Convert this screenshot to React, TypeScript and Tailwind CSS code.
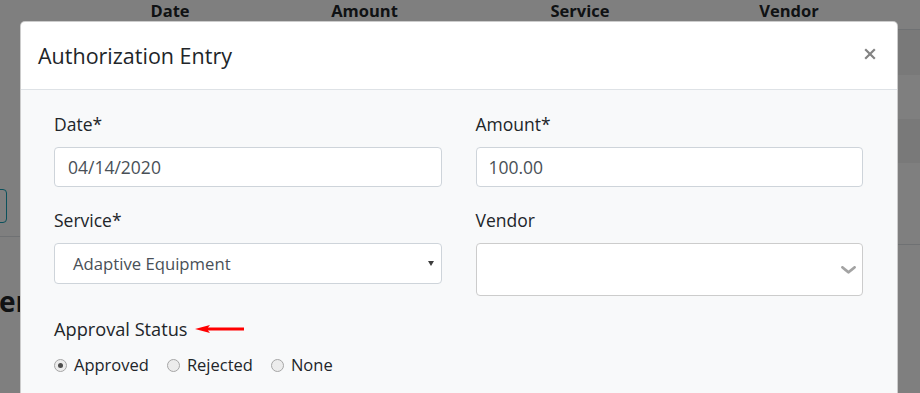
import React from "react";

function Radio({ checked, label }: { checked?: boolean; label: string }) {
  return (
    <div className="flex items-center gap-[7px]">
      <div className="w-[13px] h-[13px] rounded-full border border-[#a6a6a6] bg-[#ececec] flex items-center justify-center">
        {checked && <div className="w-[5px] h-[5px] rounded-full bg-[#4d4d4d]" />}
      </div>
      <span className="text-[16.5px] leading-[26px] text-[#212529]">{label}</span>
    </div>
  );
}

export default function App() {
  return (
    <div className="relative w-[920px] h-[393px] overflow-hidden bg-white font-['Open_Sans',sans-serif] text-[#212529]">
      {/* background page */}
      <div className="flex h-full">
        <div className="w-[20px] shrink-0 overflow-hidden">
          <div className="h-[189px]" />
          <div className="w-[40px] h-[34px] -ml-[33px] border border-[#17a2b8] rounded-[4px]" />
          <div className="mt-[13px] border-t border-[#dee2e6]" />
          <div className="mt-[47px] -ml-[1px] text-[28px] font-bold leading-[34px] whitespace-nowrap">ere</div>
        </div>
        <div className="flex-1 flex flex-col">
          <div className="h-[30px] flex pl-[40px] border-b border-[#dee2e6] text-[16.5px] font-bold leading-[20px] pt-[1px]">
            <div className="w-[220px] text-center">Date</div>
            <div className="w-[169px] text-center">Amount</div>
            <div className="w-[262px] text-center">Service</div>
            <div className="w-[156px] text-center">Vendor</div>
          </div>
          <div className="h-[45px] bg-black/5" />
          <div className="h-[44px]" />
          <div className="h-[44px] bg-black/5" />
          <div className="h-[82px] border-b border-[#dee2e6]" />
        </div>
      </div>

      {/* backdrop */}
      <div className="absolute inset-0 bg-black/50" />

      {/* modal */}
      <div className="absolute left-[20px] top-[21px] w-[878px] h-[400px] rounded-t-[5px] border border-black/20 bg-white overflow-hidden flex flex-col">
        <div className="h-[68px] shrink-0 flex items-center justify-between pl-[17px] pr-[21px] border-b border-[#dee2e6]">
          <h5 className="text-[21.5px] font-medium leading-[30px] text-[#212529]">Authorization Entry</h5>
          <svg width="12" height="12" viewBox="0 0 12 12" className="-mt-[4px]">
            <path d="M1.2 1.2 L10.8 10.8 M10.8 1.2 L1.2 10.8" stroke="#838383" strokeWidth="2.2" strokeLinecap="butt" />
          </svg>
        </div>
        <div className="flex-1 bg-[#f8f9fa] pl-[33px] pr-[34px] pt-[21px]">
          <div className="grid grid-cols-2 gap-x-[34px] gap-y-[20px] items-start">
            <div>
              <div className="text-[17.5px] leading-[26px] mb-[10px]">Date*</div>
              <div className="h-[40px] bg-white border border-[#ced4da] rounded-[4px] flex items-center pl-[13px] text-[17.5px] text-[#495057]">
                04/14/2020
              </div>
            </div>
            <div>
              <div className="text-[17.5px] leading-[26px] mb-[10px]">Amount*</div>
              <div className="h-[40px] bg-white border border-[#ced4da] rounded-[4px] flex items-center pl-[12px] text-[17.5px] text-[#495057]">
                100.00
              </div>
            </div>
            <div>
              <div className="text-[17.5px] leading-[26px] mb-[10px]">Service*</div>
              <div className="h-[41px] bg-white border border-[#ced4da] rounded-[4px] flex items-center justify-between pl-[18px] pr-[7px] text-[16.7px] text-[#495057]">
                <span>Adaptive Equipment</span>
                <svg width="6" height="5" viewBox="0 0 6 5">
                  <polygon points="0,0 6,0 3,5" fill="#3d3d3d" />
                </svg>
              </div>
            </div>
            <div>
              <div className="text-[17.5px] leading-[26px] mb-[10px]">Vendor</div>
              <div className="h-[53px] bg-white border border-[#cccccc] rounded-[4px] flex items-center justify-end pr-[6px]">
                <svg width="15" height="8" viewBox="4.2 7.2 11.6 7.1" preserveAspectRatio="none">
                  <path
                    d="M4.516 7.548c0.436-0.446 1.043-0.481 1.576 0l3.908 3.747 3.908-3.747c0.533-0.481 1.141-0.446 1.574 0 0.436 0.445 0.408 1.197 0 1.615-0.406 0.418-4.695 4.502-4.695 4.502-0.217 0.223-0.502 0.335-0.787 0.335s-0.57-0.112-0.789-0.335c0 0-4.287-4.084-4.695-4.502s-0.436-1.17 0-1.615z"
                    fill="#a3a3a3"
                  />
                </svg>
              </div>
            </div>
          </div>

          <div className="mt-[20px] flex items-center mb-[10px]">
            <span className="text-[18.2px] leading-[26px]">Approval Status</span>
            <svg width="50" height="10" viewBox="0 0 50 10" className="ml-[7px]">
              <polygon points="0,5 15,1 13,3.5 13,6.5 15,9" fill="#ff0000" />
              <rect x="13" y="3.5" width="36" height="3" fill="#ff0000" />
            </svg>
          </div>
          <div className="flex items-center gap-[18px]">
            <Radio checked label="Approved" />
            <Radio label="Rejected" />
            <Radio label="None" />
          </div>
        </div>
      </div>
    </div>
  );
}
